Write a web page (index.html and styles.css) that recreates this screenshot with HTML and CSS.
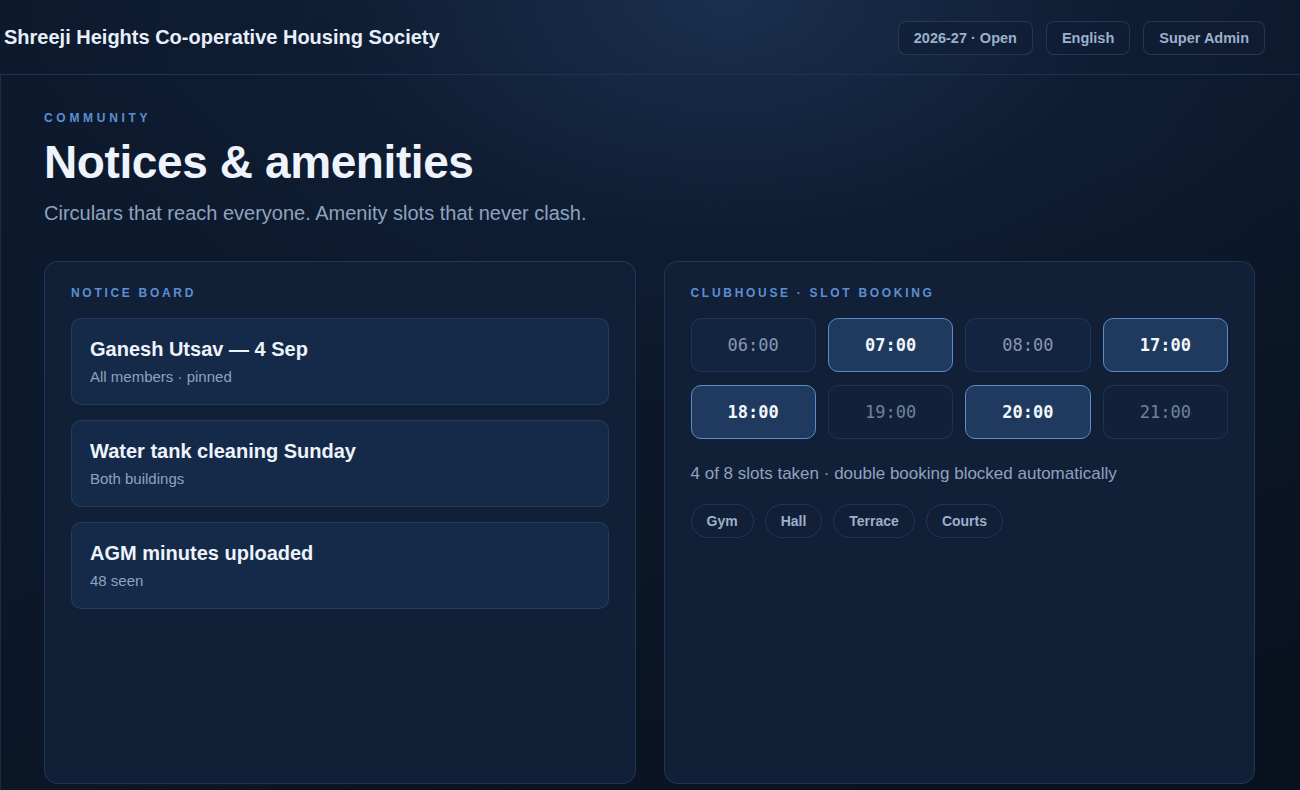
FILE: index.html
```html
<!DOCTYPE html>
<html lang="en">
<head>
<meta charset="utf-8">
<title>Notices &amp; amenities</title>
<link rel="stylesheet" href="styles.css">
</head>
<body>
<header class="topbar">
  <div class="brand">Shreeji Heights Co-operative Housing Society</div>
  <nav class="actions">
    <span class="chip">2026-27 · Open</span>
    <span class="chip">English</span>
    <span class="chip">Super Admin</span>
  </nav>
</header>
<main class="main">
  <div class="eyebrow">COMMUNITY</div>
  <h1 class="title">Notices &amp; amenities</h1>
  <p class="lede">Circulars that reach everyone. Amenity slots that never clash.</p>
  <section class="panels">
    <div class="panel">
      <div class="panel-label">NOTICE BOARD</div>
      <div class="notices">
        <div class="notice">
          <div class="notice-title">Ganesh Utsav — 4 Sep</div>
          <div class="notice-sub">All members · pinned</div>
        </div>
        <div class="notice">
          <div class="notice-title">Water tank cleaning Sunday</div>
          <div class="notice-sub">Both buildings</div>
        </div>
        <div class="notice">
          <div class="notice-title">AGM minutes uploaded</div>
          <div class="notice-sub">48 seen</div>
        </div>
      </div>
    </div>
    <div class="panel">
      <div class="panel-label">CLUBHOUSE · SLOT BOOKING</div>
      <div class="slots">
        <div class="slot">06:00</div>
        <div class="slot taken">07:00</div>
        <div class="slot">08:00</div>
        <div class="slot taken">17:00</div>
        <div class="slot taken">18:00</div>
        <div class="slot dim">19:00</div>
        <div class="slot taken">20:00</div>
        <div class="slot dim">21:00</div>
      </div>
      <p class="slot-note">4 of 8 slots taken · double booking blocked automatically</p>
      <div class="pills">
        <span class="pill">Gym</span>
        <span class="pill">Hall</span>
        <span class="pill">Terrace</span>
        <span class="pill">Courts</span>
      </div>
    </div>
  </section>
</main>
</body>
</html>
```
FILE: styles.css
```css
* { box-sizing: border-box; }
html, body { height: 100%; }
body {
  margin: 0;
  font-family: "Liberation Sans", Arial, sans-serif;
  color: #e8effa;
  background:
    radial-gradient(ellipse 700px 420px at 56% 0%, rgba(30, 55, 88, 0.75) 0%, rgba(20, 38, 64, 0.35) 55%, rgba(12, 22, 40, 0) 100%),
    linear-gradient(160deg, #0d1a2e 0%, #0c182b 45%, #08111d 100%);
  display: flex;
  flex-direction: column;
  overflow: hidden;
}
.topbar {
  height: 75px;
  flex: none;
  display: flex;
  align-items: center;
  justify-content: space-between;
  padding: 1px 35px 0 4px;
  border-bottom: 1px solid #1c3452;
}
.brand {
  font-size: 20px;
  font-weight: 700;
  color: #e8effa;
}
.actions { display: flex; gap: 13px; }
.chip {
  height: 34px;
  display: inline-flex;
  align-items: center;
  padding: 0 15px;
  border: 1px solid rgba(95, 130, 180, 0.25);
  border-radius: 8px;
  background: rgba(16, 30, 52, 0.55);
  font-size: 14.5px;
  font-weight: 700;
  color: #9bb0cb;
}
.main {
  flex: 1;
  display: flex;
  flex-direction: column;
  padding: 36px 45px 6px 43px;
  border-left: 1px solid #1a2b43;
  min-height: 0;
}
.eyebrow {
  font-size: 12px;
  line-height: 14px;
  font-weight: 700;
  letter-spacing: 3.7px;
  color: #5b8fd2;
}
.title {
  margin: 12px 0 0;
  font-size: 46px;
  line-height: 50px;
  font-weight: 700;
  letter-spacing: -0.4px;
  color: #eef3fc;
}
.lede {
  margin: 13px 0 0;
  font-size: 20px;
  line-height: 26px;
  color: #8ea3bf;
}
.panels {
  flex: 1;
  margin-top: 35px;
  display: grid;
  grid-template-columns: 1fr 1fr;
  gap: 28px;
  min-height: 0;
}
.panel {
  background: #111f37;
  border: 1px solid rgba(90, 130, 190, 0.22);
  border-radius: 14px;
  padding: 24px 26px;
}
.panel-label {
  font-size: 12px;
  line-height: 14px;
  font-weight: 700;
  letter-spacing: 2.7px;
  color: #5b8fd2;
}
.notices {
  margin-top: 18px;
  display: flex;
  flex-direction: column;
  gap: 15px;
}
.notice {
  background: #152a48;
  border: 1px solid rgba(90, 130, 190, 0.2);
  border-radius: 10px;
  padding: 18px 18px 18px;
}
.notice-title {
  font-size: 20px;
  line-height: 24px;
  font-weight: 700;
  color: #eef3fc;
}
.notice-sub {
  margin-top: 7px;
  font-size: 15px;
  line-height: 18px;
  color: #8ea3bf;
}
.slots {
  margin-top: 18px;
  display: grid;
  grid-template-columns: repeat(4, 1fr);
  column-gap: 12px;
  row-gap: 13px;
}
.slot {
  height: 54px;
  display: flex;
  align-items: center;
  justify-content: center;
  background: #132440;
  border: 1px solid rgba(90, 130, 190, 0.18);
  border-radius: 10px;
  font-family: "DejaVu Sans Mono", "Liberation Mono", monospace;
  font-size: 17px;
  color: #8797b0;
}
.slot.dim { color: #718299; background: #12213a; }
.slot.taken {
  background: #1f3a5e;
  border-color: #5c8bca;
  color: #f2f6fd;
  font-weight: 700;
}
.slot-note {
  margin: 24px 0 0;
  font-size: 17px;
  line-height: 22px;
  color: #8ea3bf;
}
.pills {
  margin-top: 19px;
  display: flex;
  gap: 11px;
}
.pill {
  height: 34px;
  display: inline-flex;
  align-items: center;
  padding: 0 15px;
  border: 1px solid rgba(90, 130, 190, 0.22);
  border-radius: 999px;
  font-size: 14px;
  font-weight: 700;
  color: #9bb0cb;
}
```
